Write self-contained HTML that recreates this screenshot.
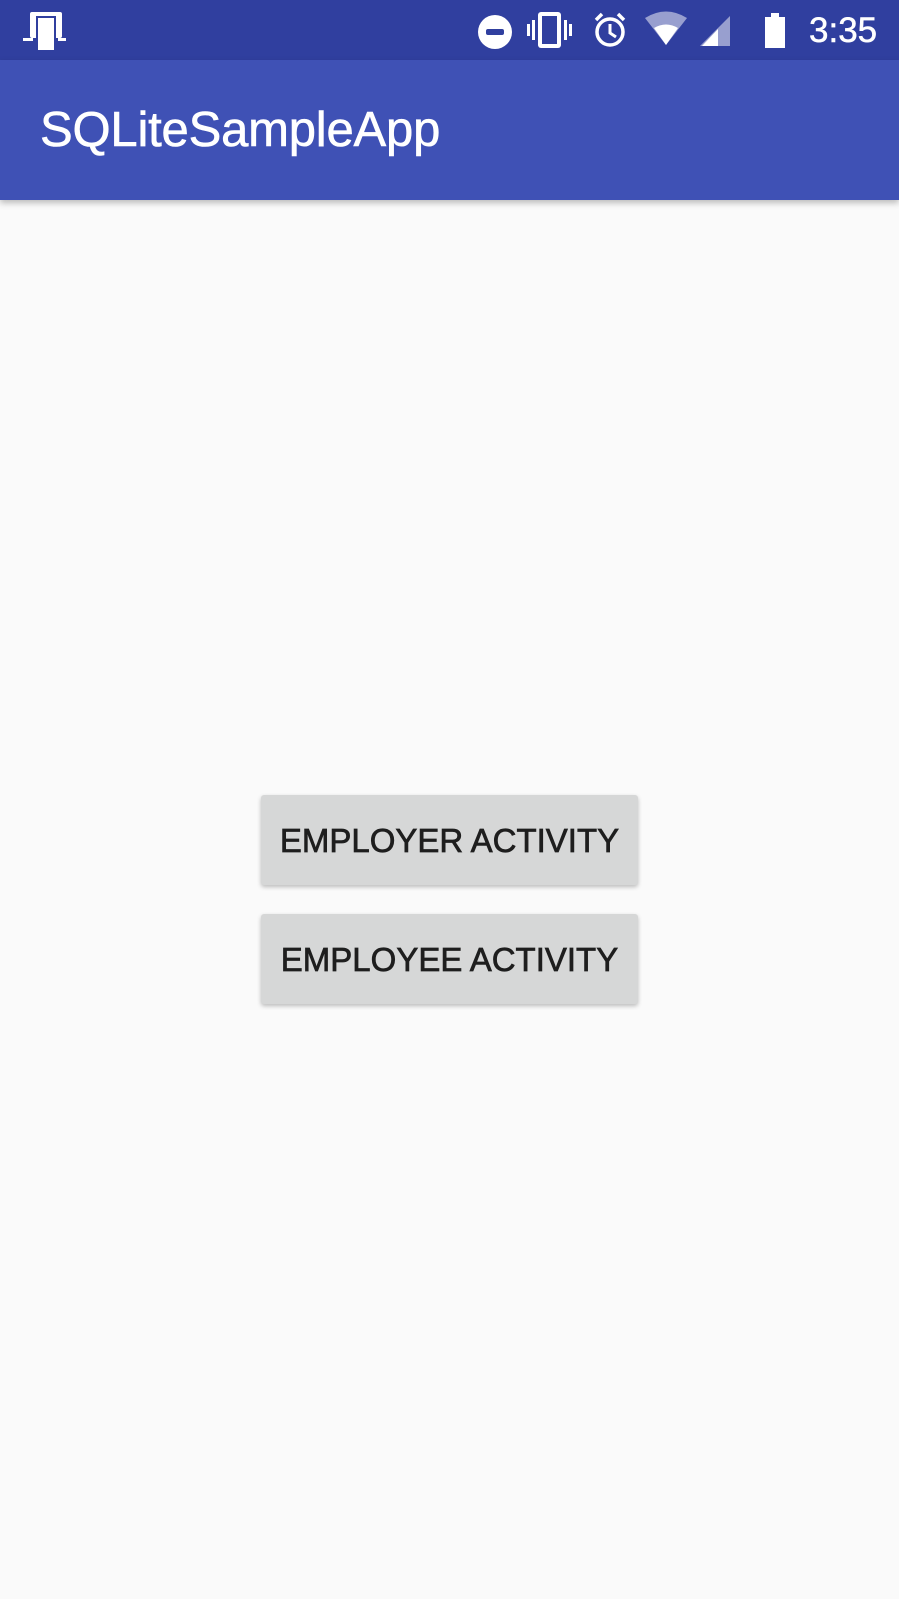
<!DOCTYPE html>
<html><head><meta charset="utf-8"><style>
*{margin:0;padding:0;box-sizing:border-box}
body{width:899px;height:1599px;background:#fafafa;font-family:"Liberation Sans",sans-serif;position:relative;overflow:hidden}
.sb{position:absolute;left:0;top:0;width:899px;height:60px;background:#303f9f}
.ab{position:absolute;left:0;top:60px;width:899px;height:140px;background:#3f51b5;box-shadow:0 3px 6px rgba(0,0,0,.25)}
.title{position:absolute;left:40px;top:102px;color:#fff;font-size:49px;line-height:56px;letter-spacing:-0.2px;-webkit-text-stroke:0.6px #fff}
.time{position:absolute;left:809px;top:11px;color:#fff;font-size:35px;line-height:40px;-webkit-text-stroke:0.5px #fff}
.btn{position:absolute;left:261px;width:377px;height:90px;background:#d6d7d7;border-radius:3px;box-shadow:0 2px 4px rgba(0,0,0,.25);color:#1e1e1e;font-size:33px;line-height:92px;text-align:center;-webkit-text-stroke:0.7px #1e1e1e}
</style></head><body>
<div class="sb">
<svg width="899" height="60" style="position:absolute;left:0;top:0">
<g fill="#fff">
<rect x="30" y="12" width="32" height="26" rx="2"/>
<rect x="36" y="16" width="20" height="34" fill="#303f9f"/>
<rect x="38" y="18" width="16" height="32"/>
<rect x="23" y="38" width="10" height="3"/><rect x="58" y="38" width="8" height="3"/>
<circle cx="495" cy="32" r="17"/>
<rect x="538" y="12" width="23" height="36" rx="3"/>
<rect x="532" y="20" width="3" height="20"/><rect x="564" y="20" width="3" height="20"/>
<rect x="527" y="24" width="3" height="12"/><rect x="569" y="24" width="3" height="12"/>
<path d="M645 18 Q666 5 687 18 L666 45Z" opacity="0.5"/>
<path d="M654 28 Q666 21 678 28 L666 45Z"/>
<path d="M730 16 L730 46 L700 46Z" opacity="0.5"/>
<path d="M718 29 L718 46 L702 46Z"/>
<rect x="765" y="17" width="20" height="31"/><rect x="771" y="13" width="8" height="4"/>
</g>
<rect x="486" y="29" width="18" height="6" rx="2" fill="#303f9f"/>
<rect x="542" y="16" width="15" height="28" fill="#303f9f"/>
<circle cx="610" cy="32" r="13" fill="none" stroke="#fff" stroke-width="3.5"/>
<path d="M610 24 V33 L616 37" stroke="#fff" stroke-width="3" fill="none"/>
<path d="M596 20 L602 14 M624 20 L618 14" stroke="#fff" stroke-width="3.5"/>
</svg>
<div class="time">3:35</div>
</div>
<div class="ab"><div></div></div>
<div class="title">SQLiteSampleApp</div>
<div class="btn" style="top:795px">EMPLOYER ACTIVITY</div>
<div class="btn" style="top:914px">EMPLOYEE ACTIVITY</div>
</body></html>
